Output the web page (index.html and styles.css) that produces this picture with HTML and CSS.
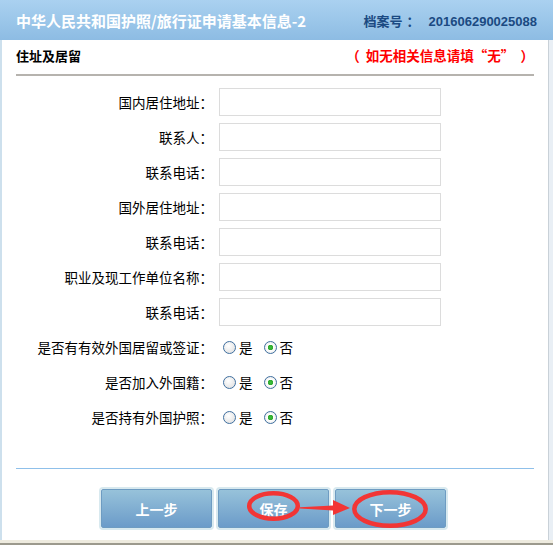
FILE: index.html
```html
<!DOCTYPE html>
<html lang="zh-CN">
<head>
  <meta charset="UTF-8">
  <title>基本信息-2</title>
  <link rel="stylesheet" href="styles.css">
</head>
<body>
  <div class="window">
    <!-- 标题栏 -->
    <div class="header">
      <span class="title">中华人民共和国护照/旅行证申请基本信息-2</span>
      <span class="file-no">档案号<span class="sep">：</span><span class="num">201606290025088</span></span>
    </div>

    <div class="content">
      <div class="section-head">
        <span class="section-title">住址及居留</span>
        <span class="note">（&nbsp;&nbsp;如无相关信息请填“无”&nbsp;&nbsp;）</span>
      </div>

      <div class="form">
        <label class="lbl">国内居住地址<span class="colon">：</span></label>
        <input class="field" type="text">
        <label class="lbl">联系人<span class="colon">：</span></label>
        <input class="field" type="text">
        <label class="lbl">联系电话<span class="colon">：</span></label>
        <input class="field" type="text">
        <label class="lbl">国外居住地址<span class="colon">：</span></label>
        <input class="field" type="text">
        <label class="lbl">联系电话<span class="colon">：</span></label>
        <input class="field" type="text">
        <label class="lbl">职业及现工作单位名称<span class="colon">：</span></label>
        <input class="field" type="text">
        <label class="lbl">联系电话<span class="colon">：</span></label>
        <input class="field" type="text">

        <label class="lbl">是否有有效外国居留或签证<span class="colon">：</span></label>
        <div class="choice">
          <label class="opt"><input type="radio" name="q1">是</label>
          <label class="opt"><input type="radio" name="q1" checked>否</label>
        </div>
        <label class="lbl">是否加入外国籍<span class="colon">：</span></label>
        <div class="choice">
          <label class="opt"><input type="radio" name="q2">是</label>
          <label class="opt"><input type="radio" name="q2" checked>否</label>
        </div>
        <label class="lbl">是否持有外国护照<span class="colon">：</span></label>
        <div class="choice">
          <label class="opt"><input type="radio" name="q3">是</label>
          <label class="opt"><input type="radio" name="q3" checked>否</label>
        </div>
      </div>

      <div class="divider"></div>

      <div class="actions">
        <button class="btn">上一步</button>
        <button class="btn">保存</button>
        <button class="btn">下一步</button>
        <!-- 红色标注 -->
        <svg class="marks" width="546" height="44" viewBox="0 0 546 44">
          <ellipse cx="271.5" cy="19" rx="24.3" ry="12.8" fill="none" stroke="#f23535" stroke-width="4.5"/>
          <ellipse cx="388" cy="22" rx="35.7" ry="16.8" fill="none" stroke="#f23535" stroke-width="4.5"/>
          <polygon points="298,20.3 331,18.6 331,13 348,21 331,28 331,23.6 298,21.4" fill="#f23535"/>
        </svg>
      </div>
    </div>

    <div class="bottom"></div>
  </div>
</body>
</html>
```

FILE: styles.css
```css
* {
  box-sizing: border-box;
}
body {
  margin: 0;
  background: #fff;
  font-family: "Liberation Sans", "Noto Sans CJK SC", sans-serif;
  font-size: 13px;
  color: #000;
}
.window {
  width: 553px;
  height: 545px;
  background: #e9eff5;
  display: flex;
  flex-direction: column;
}
.header {
  height: 40px;
  flex: none;
  display: flex;
  align-items: center;
  justify-content: space-between;
  padding: 0 16px 0 16px;
  background: linear-gradient(#aad1f0, #8dbce3);
}
.title {
  color: #fff;
  font-size: 15px;
  font-weight: bold;
  font-family: "Noto Sans CJK SC", sans-serif;
}
.file-no {
  color: #1b4a82;
  font-weight: bold;
  font-size: 13px;
  margin-top: 1px;
  font-family: "Noto Sans CJK SC", sans-serif;
}
.file-no .sep {
  font-family: "Noto Sans CJK JP", sans-serif;
  margin: 0 9px 0 4px;
}
.file-no .num {
  font-family: "Liberation Sans", sans-serif;
}
.content {
  height: 500px;
  margin-right: 4px;
  background: #fff;
  border-left: 2px solid #cde0ed;
  border-right: 1px solid #c9d1d8;
}
.section-head {
  height: 36px;
  margin: 0 14px 0 14px;
  padding-bottom: 4px;
  display: flex;
  align-items: center;
  justify-content: space-between;
  border-bottom: 2px solid #b6b3ae;
  font-family: "Noto Sans CJK SC", sans-serif;
  font-weight: bold;
}
.note {
  color: #ff0000;
  font-size: 13.5px;
}
.form {
  margin-top: 12px;
  display: grid;
  grid-template-columns: 211px 222px;
  grid-auto-rows: 28px;
  column-gap: 6px;
  row-gap: 7px;
  align-items: center;
}
.lbl {
  text-align: right;
  font-family: "Noto Sans CJK SC", sans-serif;
  font-size: 13.5px;
  line-height: 28px;
}
.colon {
  font-family: "Noto Sans CJK JP", sans-serif;
}
.field {
  width: 222px;
  height: 28px;
  border: 1px solid #dcdcdc;
  background: #fff;
  outline: none;
}
.choice {
  display: flex;
  align-items: center;
  gap: 11px;
  padding-left: 4px;
  font-family: "Noto Sans CJK SC", sans-serif;
  font-size: 13.5px;
}
.opt {
  display: flex;
  align-items: center;
  gap: 3px;
}
.opt input {
  appearance: none;
  -webkit-appearance: none;
  margin: 0;
  width: 13px;
  height: 13px;
  border-radius: 50%;
  border: 1px solid #3f6f9f;
  background: radial-gradient(circle at 40% 35%, #ffffff, #dcdcdc);
}
.opt input:checked {
  background: radial-gradient(circle, #3cc13c 0, #2fa82f 2.5px, #ffffff 3px, #e2e2e2 100%);
}
.divider {
  margin: 37px 14px 0 14px;
  height: 1px;
  background: #8fc0ea;
}
.actions {
  position: relative;
  margin-top: 20px;
  display: flex;
  justify-content: center;
  gap: 6px;
  padding-right: 3px;
}
.btn {
  width: 111px;
  height: 39px;
  border: 1px solid #6e9cc2;
  border-radius: 2px;
  background: linear-gradient(#97c2da, #6b9bc9);
  box-shadow: 0 0 0 2px #d8e9ef;
  color: #fff;
  font-size: 14px;
  font-weight: bold;
  font-family: "Noto Sans CJK SC", sans-serif;
  padding: 0;
}
.marks {
  position: absolute;
  left: 0;
  top: -2px;
  pointer-events: none;
}
.bottom {
  flex: none;
  height: 5px;
  border-top: 3px solid #eeebdf;
  background: #9c9a8e;
}
```
